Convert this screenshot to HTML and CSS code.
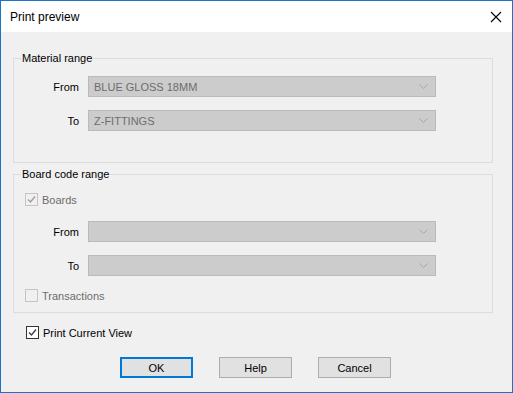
FILE: index.html
```html
<!DOCTYPE html>
<html lang="en">
<head>
    <meta charset="UTF-8">
    <title>Print preview</title>
    <link rel="stylesheet" href="styles.css">
</head>
<body>
    <div class="window">
        <header class="titlebar">
            <span class="title">Print preview</span>
            <svg class="close" width="12" height="12" viewBox="0 0 12 12">
                <path d="M1 1 L11 11 M11 1 L1 11" stroke="#000" stroke-width="1.1" fill="none"/>
            </svg>
        </header>
        <main class="content">
            <fieldset class="group group-material">
                <legend>Material range</legend>
                <div class="row">
                    <label class="label">From</label>
                    <div class="combo">
                        <span>BLUE GLOSS 18MM</span>
                        <svg class="chevron" width="9" height="5" viewBox="0 0 9 5"><path d="M0.5 0.5 L4.5 4.5 L8.5 0.5" stroke="#a6a6a6" fill="none"/></svg>
                    </div>
                </div>
                <div class="row">
                    <label class="label">To</label>
                    <div class="combo">
                        <span>Z-FITTINGS</span>
                        <svg class="chevron" width="9" height="5" viewBox="0 0 9 5"><path d="M0.5 0.5 L4.5 4.5 L8.5 0.5" stroke="#a6a6a6" fill="none"/></svg>
                    </div>
                </div>
            </fieldset>

            <fieldset class="group group-board">
                <legend>Board code range</legend>
                <div class="check disabled check-boards">
                    <span class="box checked">
                        <svg width="11" height="11" viewBox="0 0 11 11"><path d="M2 5.5 L4.5 8 L9 2.5" stroke="#a0a0a0" stroke-width="1.4" fill="none"/></svg>
                    </span>
                    <span>Boards</span>
                </div>
                <div class="row">
                    <label class="label">From</label>
                    <div class="combo">
                        <span></span>
                        <svg class="chevron" width="9" height="5" viewBox="0 0 9 5"><path d="M0.5 0.5 L4.5 4.5 L8.5 0.5" stroke="#a6a6a6" fill="none"/></svg>
                    </div>
                </div>
                <div class="row">
                    <label class="label">To</label>
                    <div class="combo">
                        <span></span>
                        <svg class="chevron" width="9" height="5" viewBox="0 0 9 5"><path d="M0.5 0.5 L4.5 4.5 L8.5 0.5" stroke="#a6a6a6" fill="none"/></svg>
                    </div>
                </div>
                <div class="check disabled check-trans">
                    <span class="box"></span>
                    <span>Transactions</span>
                </div>
            </fieldset>

            <div class="check check-print">
                <span class="box checked">
                    <svg width="11" height="11" viewBox="0 0 11 11"><path d="M2 5.5 L4.5 8 L9 2.5" stroke="#404040" stroke-width="1.4" fill="none"/></svg>
                </span>
                <span>Print Current View</span>
            </div>

            <div class="buttons">
                <button class="btn default">OK</button>
                <button class="btn">Help</button>
                <button class="btn">Cancel</button>
            </div>
        </main>
    </div>
</body>
</html>
```

FILE: styles.css
```css
body {
    margin: 0;
    font-family: "Liberation Sans", Arial, sans-serif;
    font-size: 11px;
    color: #000;
    background: #f0f0f0;
}

.window {
    width: 513px;
    height: 393px;
    box-sizing: border-box;
    border: 1px solid #1c74c6;
    background: #f0f0f0;
    display: flex;
    flex-direction: column;
}

.titlebar {
    height: 31px;
    background: #fff;
    display: flex;
    align-items: center;
    justify-content: space-between;
    padding: 0 10px 0 9px;
}

.title {
    font-size: 12px;
    margin-top: 1px;
}

.close {
    display: block;
}

.content {
    flex: 1;
    display: flex;
    flex-direction: column;
    padding: 20px 0 0 12px;
}

.group {
    width: 480px;
    box-sizing: border-box;
    margin: 0;
    padding: 0;
    border: 1px solid #dcdcdc;
    min-width: 0;
}

.group legend {
    margin-left: 7px;
    padding: 0 1px;
    line-height: 13px;
    font-size: 11px;
}

.group-material {
    height: 111px;
    padding-top: 11px;
}

.group-board {
    margin-top: 5px;
    height: 145px;
    padding-top: 12px;
}

.row {
    display: flex;
    align-items: center;
    margin-bottom: 13px;
}

.label {
    width: 65px;
    text-align: right;
    margin-right: 9px;
}

.combo {
    width: 348px;
    height: 21px;
    box-sizing: border-box;
    border: 1px solid #bababa;
    background: #cccccc;
    color: #6d6d6d;
    display: flex;
    align-items: center;
    justify-content: space-between;
    padding: 0 7px 0 5px;
}

.chevron {
    display: block;
}

.check {
    display: flex;
    align-items: center;
    gap: 4px;
    margin-left: 11px;
    height: 13px;
}

.check.disabled {
    color: #6d6d6d;
}

.box {
    width: 13px;
    height: 13px;
    box-sizing: border-box;
    border: 1px solid #333;
    background: #fff;
    display: flex;
    align-items: center;
    justify-content: center;
}

.check.disabled .box {
    border-color: #c5c5c5;
    background: #f0f0f0;
}

.check-boards {
    margin-bottom: 15px;
}

.check-trans {
    margin-top: 2px;
}

.check-print {
    margin-top: 13px;
    margin-left: 13px;
}

.buttons {
    display: flex;
    gap: 26px;
    margin-top: 18px;
    padding-left: 107px;
}

.btn {
    width: 73px;
    height: 21px;
    box-sizing: border-box;
    border: 1px solid #adadad;
    background: #e1e1e1;
    font-family: "Liberation Sans", Arial, sans-serif;
    font-size: 11px;
    color: #000;
    padding: 0;
}

.btn.default {
    border: 2px solid #0078d7;
}
```
